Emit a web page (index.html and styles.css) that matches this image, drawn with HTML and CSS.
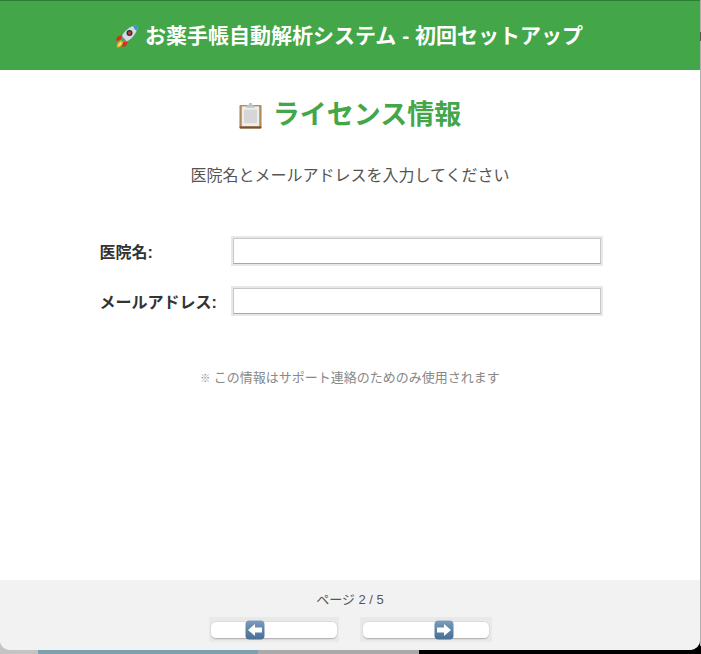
FILE: index.html
```html
<!DOCTYPE html>
<html lang="ja">
<head>
<meta charset="utf-8">
<title>初回セットアップ</title>
<link rel="stylesheet" href="styles.css">
</head>
<body>
<div class="window">
  <header class="header">
    <svg class="rocket" viewBox="0 0 24 24" aria-hidden="true">
      <path d="M7 11 L2 13 L1 17 L6 15.5Z" fill="#e02a1c"/>
      <path d="M13 17 L11 22 L7 23 L8.5 18Z" fill="#e02a1c"/>
      <path d="M6 16 L2.5 19 L1.5 23.5 L5 23 L8.5 18.5Z" fill="#f5a623"/>
      <path d="M5.5 18 L3.5 20 L3 22.5 L5.5 21.5 L7 19.5Z" fill="#fbe26a"/>
      <path d="M7 12 C10 6 15 2 23 1 C22.5 8 18 14 12 17.5 L9 17 Z" fill="#d5dce3"/>
      <path d="M18 1.8 C20 1.4 22 1.1 23 1 C22.9 3 22.4 5 21.6 6.6 C20 6.2 18.6 4 18 1.8Z" fill="#3d93d6"/>
      <path d="M7 12 L12 17.5 L9 17 L7.5 14.5Z" fill="#7b8791"/>
      <circle cx="14.5" cy="9" r="3" fill="#2b2f38"/>
      <circle cx="14.5" cy="9" r="1.7" fill="#c9343a"/>
    </svg>
    <h1 class="app-title">お薬手帳自動解析システム - 初回セットアップ</h1>
  </header>
  <main class="content">
    <h2 class="page-title">
      <svg class="clipboard" viewBox="0 0 25 28" preserveAspectRatio="none" aria-hidden="true">
        <rect x="0.5" y="3" width="24" height="24.5" rx="1.5" fill="#b08a5c"/>
        <rect x="0.5" y="25.5" width="24" height="2" rx="1" fill="#75522e"/>
        <rect x="3" y="4.5" width="19" height="20.5" fill="#ededec"/>
        <rect x="5.5" y="8" width="14" height="14" fill="#d6d6d6"/>
        <path d="M8 4 L10.5 3 L11 1 L14 1 L14.5 3 L17 4 L17 6 L8 6Z" fill="#c0c4c8"/>
      </svg>
      <span>ライセンス情報</span>
    </h2>
    <p class="lead">医院名とメールアドレスを入力してください</p>
    <form class="form">
      <label class="label" for="clinic">医院名:</label>
      <input class="field" id="clinic" type="text">
      <label class="label" for="email">メールアドレス:</label>
      <input class="field" id="email" type="text">
    </form>
    <p class="note"><span class="note-mark">※</span> この情報はサポート連絡のためのみ使用されます</p>
  </main>
  <footer class="footer">
    <div class="page-count">ページ 2 / 5</div>
    <div class="nav">
      <div class="btn-wrap">
        <button class="btn btn-prev" type="button" aria-label="戻る">
          <svg class="arrow" viewBox="0 0 20 20" aria-hidden="true">
            <defs>
              <linearGradient id="tile" x1="0" y1="0" x2="0" y2="1">
                <stop offset="0" stop-color="#7d9dbc"/>
                <stop offset="0.5" stop-color="#5d83a8"/>
                <stop offset="1" stop-color="#4a6f94"/>
              </linearGradient>
            </defs>
            <rect x="0.5" y="0.5" width="19" height="19" rx="4" fill="url(#tile)"/>
            <path d="M3 10 L10 4 L10 7.5 L17 7.5 L17 12.5 L10 12.5 L10 16Z" fill="#fff"/>
          </svg>
        </button>
      </div>
      <div class="btn-wrap btn-wrap-next">
        <button class="btn btn-next" type="button" aria-label="次へ">
          <svg class="arrow" viewBox="0 0 20 20" aria-hidden="true">
            <rect x="0.5" y="0.5" width="19" height="19" rx="4" fill="url(#tile)"/>
            <path d="M17 10 L10 4 L10 7.5 L3 7.5 L3 12.5 L10 12.5 L10 16Z" fill="#fff"/>
          </svg>
        </button>
      </div>
    </div>
  </footer>
</div>
</body>
</html>
```
FILE: styles.css
```css
* { box-sizing: border-box; }
html, body { margin: 0; height: 654px; overflow: hidden; }
body {
  font-family: "Liberation Sans", "Noto Sans CJK JP", sans-serif;
  background:
    linear-gradient(to bottom, #b0b0b0 0 32px, #555 32px 41px, #b0b0b0 41px) right top / 1px 646px no-repeat,
    linear-gradient(to right, #c4c4c4 0 38px, #7ba1ae 38px 258px, #a9a9a9 258px 419px, #000 419px);
}
.window {
  width: 700px;
  height: 650px;
  background: #fff;
  border-radius: 0 0 10px 10px;
  display: flex;
  flex-direction: column;
  overflow: hidden;
}
.header {
  height: 70px;
  flex: none;
  background: #43a648;
  border-top: 1px solid #2b7f31;
  display: flex;
  align-items: center;
  justify-content: center;
  gap: 6px;
  padding-right: 2px;
}
.rocket { width: 24px; height: 24px; flex: none; }
.app-title { margin: 0; font-size: 21px; line-height: 28px; font-weight: 700; color: #fff; }
.content { flex: 1; display: flex; flex-direction: column; align-items: center; }
.page-title {
  margin: 28px 0 0;
  display: flex;
  align-items: center;
  gap: 11px;
  font-size: 27px;
  line-height: 34px;
  font-weight: 700;
  color: #43a648;
}
.clipboard { width: 23px; height: 27px; flex: none; }
.lead { margin: 33px 0 0; font-size: 16px; line-height: 22px; color: #555; }
.form {
  margin: 49px 0 0 2px;
  display: grid;
  grid-template-columns: 131px 372px;
  row-gap: 20px;
  align-items: center;
}
.label { font-size: 16px; font-weight: 700; color: #333; }
.field {
  height: 26px;
  width: 368px;
  margin: 2px;
  background: #fff;
  border: 1px solid #c8c8c8;
  border-bottom-color: #a8a8a8;
  outline: 2px solid #e8e8e8;
  outline-offset: 0;
}
.note { margin: 53px 0 0; font-size: 13px; line-height: 18px; color: #888; }
.note-mark { font-size: 10px; }
.footer {
  height: 70px;
  flex: none;
  background: #f2f2f2;
  display: flex;
  flex-direction: column;
  align-items: center;
}
.page-count { margin-top: 11px; font-size: 13px; line-height: 17px; color: #555; }
.nav { margin-top: 9px; margin-left: 1px; display: flex; gap: 21px; }
.btn-wrap { padding: 5px 2px 3px; background: #e9e9e9; height: 25px; }
.btn-wrap-next { padding-left: 3px; padding-right: 3px; }
.btn {
  display: flex;
  align-items: center;
  width: 126px;
  height: 17px;
  padding: 0;
  background: #fff;
  border: none;
  border-bottom: 1px solid #b5b5b5;
  border-radius: 5px;
  box-shadow: 0 0 0 1px #dcdcdc;
}
.btn-prev { padding-left: 34px; }
.btn-next { padding-left: 71px; }
.btn .arrow { width: 20px; height: 20px; flex: none; }
```
